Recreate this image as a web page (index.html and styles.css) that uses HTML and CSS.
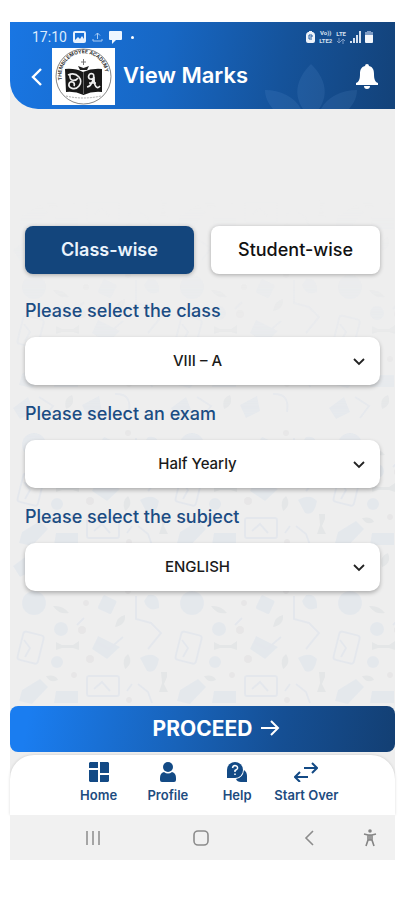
FILE: index.html
```
<!DOCTYPE html>
<html lang="en">

<head>
    <meta charset="UTF-8">
    <meta name="viewport" content="width=device-width, initial-scale=1.0">
    <title>View Marks</title>
    <link rel="stylesheet" href="styles.css">
</head>

<body>
    <div class="screen">
        <header class="header">
            <svg class="lotus" viewBox="0 0 110 50" aria-hidden="true">
                <path d="M55 5C42 18 36 34 47 50H63C74 34 68 18 55 5Z" />
                <path d="M9 31C24 31 39 38 45 50H17C12 44 9 38 9 31Z" />
                <path d="M101 31C86 31 71 38 65 50H93C98 44 101 38 101 31Z" />
            </svg>
            <div class="status-bar">
                <span class="clock">17:10</span>
                <svg width="13" height="12" viewBox="0 0 13 12">
                    <path fill="#e6f1fd" fill-rule="evenodd" d="M2 0H11Q13 0 13 2V10Q13 12 11 12H2Q0 12 0 10V2Q0 0 2 0ZM2 2V9L5 6L7 8L9 5L11 8V2Z" />
                </svg>
                <svg width="11" height="12" viewBox="0 0 11 12" fill="none" stroke="#a9cbf3">
                    <path d="M5.500 2V8M3 4.500L5.500 2L8 4.500M1 8V10H10V8" />
                </svg>
                <svg width="13" height="13" viewBox="0 0 13 13">
                    <path fill="#eef6ff" d="M1 0H12Q13 0 13 1V8Q13 9 12 9H7L3 13V9H1Q0 9 0 8V1Q0 0 1 0Z" />
                </svg>
                <span class="dot"></span>
                <div class="status-right">
                    <svg width="9" height="12" viewBox="0 0 9 12">
                        <path fill="#eef3fa" d="M3 0H6V1H7Q9 2 9 4V10Q9 12 7 12H2Q0 12 0 10V4Q0 2 2 1H3Z" />
                        <path fill="none" stroke="#1c5aa3" d="M6 8H3V4H6V6H4" />
                    </svg>
                    <div class="network">
                        <span>Vo))</span>
                        <span>LTE2</span>
                    </div>
                    <div class="network">
                        <span>LTE</span>
                        <svg width="8" height="6" viewBox="0 0 8 6" fill="none" stroke="#7d9cc6">
                            <path d="M2 0V5M0 3L2 5L4 3M6 6V1M4 3L6 1L8 3" />
                        </svg>
                    </div>
                    <svg width="11" height="12" viewBox="0 0 11 12" fill="#d5e0ef">
                        <path d="M0 10H2V12H0ZM3 7H5V12H3ZM6 4H8V12H6ZM9 0H11V12H9Z" />
                    </svg>
                    <svg width="8" height="12" viewBox="0 0 8 12">
                        <path fill="#7d9cc6" d="M2 0H6V1H8V4H0V1H2Z" />
                        <path fill="#f3f7fc" d="M0 4H8V11Q8 12 7 12H1Q0 12 0 11Z" />
                    </svg>
                </div>
            </div>
            <div class="app-bar">
                <button class="icon-button" aria-label="Back">
                    <svg width="12" height="20" viewBox="0 0 12 20" fill="none" stroke="#fff" stroke-width="2.400">
                        <path d="M10 2L2 10L10 18" />
                    </svg>
                </button>
                <svg class="logo" viewBox="0 0 63 57" role="img" aria-label="Academy logo">
                    <defs>
                        <path id="ring" d="M10 32A22 22 0 1 1 53 32" />
                    </defs>
                    <rect width="63" height="57" fill="#fff" />
                    <circle cx="31.500" cy="28.500" r="27.500" fill="none" stroke="#666" stroke-width="0.800" />
                    <text class="logo-ring"><textPath href="#ring">THEMBILEMOYEE ACADEMY</textPath></text>
                    <path d="M31.500 11V17M29 14H34" stroke="#777" />
                    <path d="M26 18L31.500 20L37 18L35 22H28Z" fill="#222" />
                    <path d="M13 21Q23 20 31 24Q40 20 50 21V44Q40 43 31.500 47Q23 43 14 44Z" fill="#181818" />
                    <path d="M31.500 24V46" stroke="#777" stroke-width="0.800" />
                    <g fill="none" stroke="#eee" stroke-width="1.700">
                        <path d="M16 27C25 23 32 32 27 38C23 43 16 40 17 36C18 32 24 34 22 38M18 27C17 34 24 33 26 30" />
                        <path d="M35 39C41 38 43 26 41 26C37 24 35 30 38 31C43 32 42 27 42 30C42 38 45 42 48 38M37 35H44" />
                    </g>
                    <path d="M14 48Q31 52 49 48" fill="none" stroke="#aaa" stroke-dasharray="2 1" />
                </svg>
                <h1 class="title">View Marks</h1>
                <button class="icon-button bell" aria-label="Notifications">
                    <svg width="22" height="26" viewBox="0 0 22 26" fill="#fff">
                        <path d="M11 0Q13 0 13 2C17 3 18 6 18 10C18 15 19 18 22 19V21H0V19C3 18 4 15 4 10C4 6 5 3 9 2Q9 0 11 0ZM8 22H14Q14 25 11 25Q8 25 8 22Z" />
                    </svg>
                </button>
            </div>
        </header>

        <main class="content">
            <svg class="doodles" aria-hidden="true">
                <defs>
                    <pattern id="doodle" width="158" height="158" patternUnits="userSpaceOnUse">
                        <g fill="#dfe5ec">
                            <circle cx="24" cy="20" r="12" />
                            <rect x="90" y="14" width="15" height="15" rx="2" transform="rotate(25 97 21)" />
                            <circle cx="51" cy="46" r="7" />
                            <circle cx="47" cy="79" r="6" />
                            <path d="M138 12Q150 10 149 25Q138 30 134 18ZM130 75Q142 68 149 76Q146 92 137 88Z" />
                            <path d="M12 107L30 96L38 104L22 121L9 118ZM46 108H68V120H44ZM88 53L110 64L97 76L82 66Z" />
                            <path d="M3 141L18 130L24 145L10 152ZM72 138L89 129L92 144L78 151Z" />
                        </g>
                        <g fill="#dee1e3">
                            <path d="M43 23Q53 22 59 30Q49 32 43 23ZM105 44Q107 33 115 32Q116 42 105 44ZM36 93Q46 91 48 97Q40 101 36 93Z" />
                            <path d="M46 59L52 62H63L69 58V67L63 65H52L46 67ZM115 86Q111 76 118 71Q124 80 115 86Z" />
                            <path d="M151 89H157V94L154 101L158 109H149L152 100ZM56 142Q53 131 62 128Q66 138 56 142Z" />
                        </g>
                        <g fill="none" stroke="#dfe4ec" stroke-width="2">
                            <rect x="10" y="50" width="21" height="29" rx="3" transform="rotate(14 20 65)" />
                            <rect x="77" y="93" width="32" height="20" rx="2" />
                            <path d="M14 57L20 65L15 74M84 106L92 99L100 108" />
                            <path d="M126 13V36L141 40L151 50L138 66M128 101L138 109L142 120M105 127Q122 126 119 145" />
                            <path d="M86 59L99 66L113 54M29 130L43 139L34 151M74 35L67 42M117 108L122 101" />
                        </g>
                        <g fill="#e3e2e3">
                            <circle cx="76" cy="20" r="3" />
                            <circle cx="80" cy="76" r="4" />
                            <circle cx="64" cy="92" r="3" />
                            <circle cx="119" cy="117" r="3" />
                            <circle cx="72" cy="47" r="4" />
                            <circle cx="118" cy="8" r="3" />
                        </g>
                    </pattern>
                </defs>
                <rect width="100%" height="100%" fill="url(#doodle)" />
            </svg>
            <div class="tabs">
                <button class="tab active">Class-wise</button>
                <button class="tab">Student-wise</button>
            </div>
            <form class="filters">
                <div class="form-group">
                    <label for="class">Please select the class</label>
                    <div class="select-box">
                        <select id="class">
                            <option>VIII – A</option>
                        </select>
                        <svg class="chevron" viewBox="0 0 12 8"><path d="M1 1L6 6L11 1" /></svg>
                    </div>
                </div>
                <div class="form-group">
                    <label for="exam">Please select an exam</label>
                    <div class="select-box">
                        <select id="exam">
                            <option>Half Yearly</option>
                        </select>
                        <svg class="chevron" viewBox="0 0 12 8"><path d="M1 1L6 6L11 1" /></svg>
                    </div>
                </div>
                <div class="form-group">
                    <label for="subject">Please select the subject</label>
                    <div class="select-box">
                        <select id="subject">
                            <option>ENGLISH</option>
                        </select>
                        <svg class="chevron" viewBox="0 0 12 8"><path d="M1 1L6 6L11 1" /></svg>
                    </div>
                </div>
            </form>
        </main>

        <button class="proceed">
            PROCEED
            <svg width="20" height="18" viewBox="0 0 20 18" fill="none" stroke="#fff" stroke-width="2">
                <path d="M1 9H18M11 2L18 9L11 16" />
            </svg>
        </button>

        <nav class="bottom-nav">
            <a href="#" class="nav-item">
                <svg width="20" height="20" viewBox="0 0 20 20" fill="#134a85">
                    <path d="M1 0H9V6H0V1ZM11 0H19L20 1V11H11ZM0 8H9V20H1L0 19ZM11 13H20V19L19 20H11Z" />
                </svg>
                Home
            </a>
            <a href="#" class="nav-item">
                <svg width="20" height="20" viewBox="0 0 20 20" fill="#134a85">
                    <circle cx="10" cy="5" r="5" />
                    <path d="M6 10Q10 13 14 10Q18 11 18 16V18Q18 20 16 20H4Q2 20 2 18V16Q2 11 6 10Z" />
                </svg>
                Profile
            </a>
            <a href="#" class="nav-item">
                <svg width="20" height="20" viewBox="0 0 20 20">
                    <path fill="#134a85" d="M17 8Q20 10 20 14V20H14Q10 20 9 17Q16 16 17 8Z" />
                    <path fill="#134a85" d="M8 0A8 8 0 1 1 8 16H0V8A8 8 0 0 1 8 0Z" />
                    <path fill="none" stroke="#fff" stroke-width="1.500" d="M5.500 6Q6 3.500 8 3.500Q11 4 10.500 6.500Q10 7.500 8 8.500V10M8 11.500V13" />
                </svg>
                Help
            </a>
            <a href="#" class="nav-item">
                <svg width="24" height="20" viewBox="0 0 24 20" fill="none" stroke="#134a85" stroke-width="2">
                    <path d="M10 6H23M18 1L23 6L18 11M14 15H1M6 10L1 15L6 20" />
                </svg>
                Start Over
            </a>
        </nav>

        <div class="system-bar">
            <button class="icon-button" aria-label="Recent apps">
                <svg width="16" height="16" viewBox="0 0 16 16" stroke="#8c8c8c" stroke-width="1.500">
                    <path d="M2 1V15M8 1V15M14 1V15" />
                </svg>
            </button>
            <button class="icon-button" aria-label="Home screen">
                <svg width="16" height="16" viewBox="0 0 16 16" fill="none" stroke="#8c8c8c" stroke-width="1.600">
                    <rect x="1" y="1" width="14" height="14" rx="4" />
                </svg>
            </button>
            <button class="icon-button" aria-label="System back">
                <svg width="10" height="16" viewBox="0 0 10 16" fill="none" stroke="#8c8c8c" stroke-width="1.600">
                    <path d="M9 1L2 8L9 15" />
                </svg>
            </button>
            <button class="icon-button" aria-label="Accessibility">
                <svg width="14" height="18" viewBox="0 0 14 18" fill="none" stroke="#858585" stroke-width="1.600">
                    <circle cx="7" cy="2" r="1.800" fill="#858585" stroke="none" />
                    <path d="M1 5L5 6H9L13 5M5 6V11L3 17M9 6V11L11 17M5 11H9M7 6V11" />
                </svg>
            </button>
        </div>
    </div>
</body>

</html>
```
FILE: styles.css
```
* {
    box-sizing: border-box;
}

body {
    display: flex;
    min-height: 100vh;
    margin: 0;
    padding: 22px 9px 40px 10px;
    background-color: #fff;
    font-family: Inter, "Open Sans", sans-serif;
}

button,
select {
    font-family: inherit;
    border: none;
    cursor: pointer;
}

svg {
    display: block;
    flex-shrink: 0;
}

.screen {
    flex: 1;
    display: flex;
    flex-direction: column;
    min-width: 0;
    background-color: #eee;
}

.header {
    position: relative;
    padding-bottom: 4px;
    border-bottom-left-radius: 28px;
    background: linear-gradient(100deg, #1976e3 0%, #1767c4 40%, #15539b 70%, #134279 100%);
    color: #fff;
}

.lotus {
    position: absolute;
    right: 29px;
    bottom: 0;
    width: 110px;
    height: 50px;
    fill: rgba(120, 170, 230, 0.12);
}

.status-bar {
    display: flex;
    align-items: center;
    gap: 6px;
    height: 26px;
    padding: 4px 22px 0 22px;
}

.clock {
    font-family: Roboto, sans-serif;
    font-size: 14px;
    line-height: 16px;
    color: #dcebfd;
}

.dot {
    width: 3px;
    height: 3px;
    margin-left: 3px;
    border-radius: 50%;
    background-color: #fff;
}

.status-right {
    display: flex;
    align-items: center;
    gap: 4px;
    margin-left: auto;
}

.network {
    display: flex;
    flex-direction: column;
    align-items: center;
    font-family: Roboto, sans-serif;
    font-size: 6px;
    font-weight: bold;
    line-height: 8px;
    color: #d5e0ef;
}

.app-bar {
    display: flex;
    align-items: center;
    padding: 0 17px 0 21px;
}

.icon-button {
    display: flex;
    align-items: center;
    justify-content: center;
    padding: 0;
    background: none;
}

.logo {
    width: 63px;
    height: 57px;
    margin: 0 8px 0 9px;
}

.logo-ring {
    font-size: 5px;
    font-weight: bold;
    fill: #333;
}

.title {
    margin: 0 auto 4px 0;
    font-size: 22px;
    font-weight: 600;
    line-height: 28px;
}

.content {
    position: relative;
    flex: 1;
    padding: 117px 15px 24px;
}

.doodles {
    position: absolute;
    inset: 0;
    width: 100%;
    height: 100%;
    opacity: 0.6;
    -webkit-mask-image: linear-gradient(transparent 90px, #000 340px);
    mask-image: linear-gradient(transparent 90px, #000 340px);
}

.tabs {
    position: relative;
    display: grid;
    grid-template-columns: 1fr 1fr;
    gap: 17px;
}

.tab {
    height: 48px;
    padding: 0 0 2px;
    border-radius: 8px;
    background-color: #fff;
    box-shadow: 0 1px 4px rgba(0, 0, 0, 0.3);
    font-size: 18px;
    font-weight: 500;
    color: #111;
}

.tab.active {
    background-color: #13457c;
    font-weight: 600;
    color: #eaf3fc;
}

.filters {
    position: relative;
    display: flex;
    flex-direction: column;
    gap: 17px;
    margin-top: 25px;
}

.form-group label {
    display: block;
    margin-bottom: 14px;
    font-size: 18px;
    font-weight: 500;
    line-height: 24px;
    color: #1b4c83;
}

.select-box {
    position: relative;
}

.select-box select {
    display: block;
    width: 100%;
    height: 48px;
    padding: 0 30px 2px 20px;
    border-radius: 10px;
    background-color: #fff;
    box-shadow: 0 2px 4px rgba(0, 0, 0, 0.28);
    font-size: 15px;
    font-weight: 500;
    color: #1a1a1a;
    text-align-last: center;
    appearance: none;
}

.chevron {
    position: absolute;
    top: 21px;
    right: 15px;
    width: 12px;
    height: 8px;
    fill: none;
    stroke: #222;
    stroke-width: 1.800;
    pointer-events: none;
}

.proceed {
    display: flex;
    align-items: center;
    justify-content: center;
    gap: 8px;
    height: 46px;
    padding: 0 0 2px 28px;
    border-radius: 8px;
    background: linear-gradient(100deg, #1a7df0 5%, #1862b8 45%, #154f94 70%, #133f73 100%);
    font-size: 21px;
    font-weight: 700;
    color: #fff;
}

.bottom-nav {
    display: grid;
    grid-template-columns: repeat(4, 1fr);
    height: 60px;
    margin-top: 3px;
    padding: 7px 54px 0;
    border-radius: 24px 24px 0 0;
    background-color: #fff;
    box-shadow: 0 0 3px rgba(0, 0, 0, 0.15);
}

.nav-item {
    display: flex;
    flex-direction: column;
    align-items: center;
    gap: 5px;
    font-size: 13px;
    font-weight: 600;
    line-height: 16px;
    color: #1d4c7f;
    text-decoration: none;
    white-space: nowrap;
}

.system-bar {
    display: grid;
    grid-template-columns: repeat(3, 1fr) 14px;
    height: 45px;
    padding: 0 18px 0 29px;
    background-color: #f1f1f1;
}
```
